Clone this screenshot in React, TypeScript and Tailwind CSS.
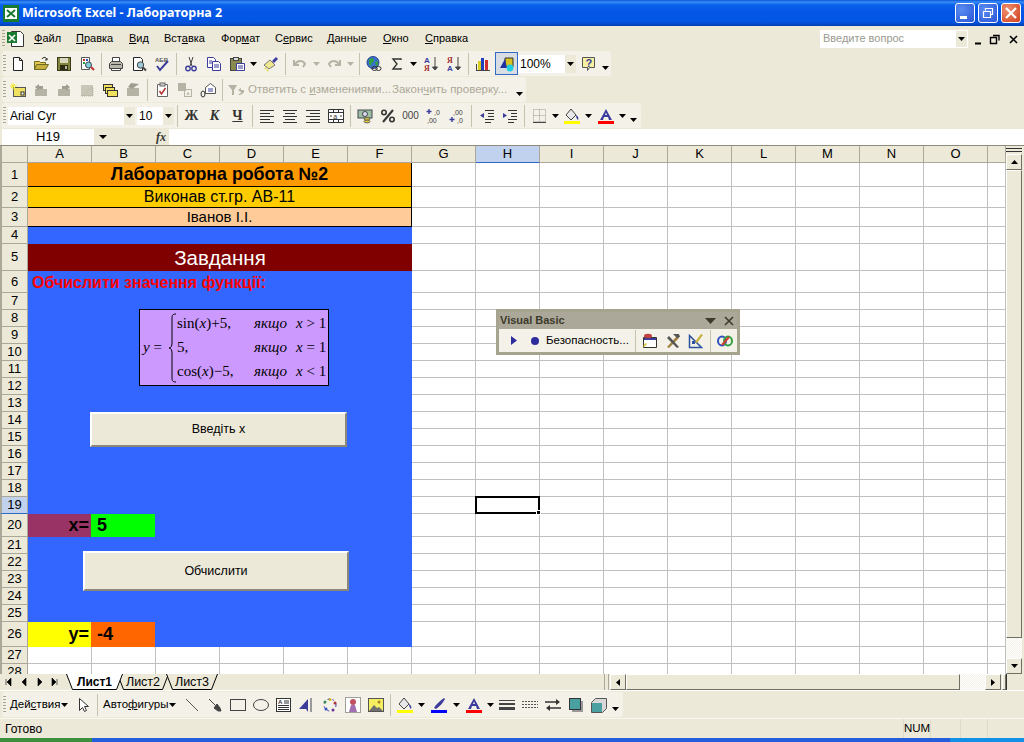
import type { ReactNode } from "react";

const ui = "font-['Liberation_Sans',Arial,sans-serif]";
const navy = "#3c3c9c";
const dis = "#b5b3a3";

const icons: Record<string, ReactNode> = {
  new: <path d="M3.5 1.5h6l3 3v10h-9zM9.5 1.5v3h3" fill="#fff" stroke="#222" />,
  open: (
    <>
      <path d="M1.5 5.5h5l1 1h5v7h-11z" fill="#e8c850" stroke="#6b6b20" />
      <path d="M3.5 8.5h12l-3 5h-11z" fill="#c8b040" stroke="#6b6b20" />
      <path d="M9 3c1-2 3-2 4-1l1 2M14 2v2h-2" fill="none" stroke="#333" />
    </>
  ),
  save: (
    <>
      <rect x="1.5" y="1.5" width="13" height="13" fill="#84843c" stroke="#3a3a18" />
      <rect x="4" y="2" width="8" height="5" fill="#d8d8c0" />
      <rect x="4" y="9" width="8" height="5" fill="#2c2c14" />
      <rect x="9" y="10" width="2" height="3" fill="#b8b8a0" />
    </>
  ),
  perm: (
    <>
      <path d="M2.5 1.5h8v12h-8z" fill="#fff" stroke="#555" />
      <rect x="4" y="3" width="2" height="2" fill="#c03030" />
      <rect x="7" y="3" width="2" height="2" fill="#3050c0" />
      <rect x="4" y="6" width="2" height="2" fill="#30a040" />
      <circle cx="9.5" cy="9" r="3" fill="#7cd0d8" stroke="#445" />
      <path d="M12 11l3 3" stroke="#c03030" strokeWidth="2" />
    </>
  ),
  print: (
    <>
      <path d="M4.5 1.5h7v5h-7z" fill="#fff" stroke="#444" />
      <path d="M1.5 7.5l2-2h9l2 2v5h-13z" fill="#b8b6a8" stroke="#444" />
      <path d="M3.5 12.5h9v2h-9z" fill="#fff" stroke="#444" />
      <path d="M3 8.5h10" stroke="#444" />
    </>
  ),
  preview: (
    <>
      <path d="M2.5 1.5h7l2 2v11h-9z" fill="#fff" stroke="#222" />
      <circle cx="9.5" cy="9" r="3.2" fill="#9cc8d8" stroke="#444" />
      <path d="M12 11.5l3 3" stroke="#444" strokeWidth="2" />
    </>
  ),
  spell: (
    <>
      <text x="1" y="6" fontSize="6" fontWeight="700" fill="#555" fontFamily="Liberation Sans">АБВ</text>
      <path d="M3 10l3 4 8-9" fill="none" stroke={navy} strokeWidth="2" />
    </>
  ),
  cut: (
    <>
      <path d="M6 1l3 9M10 1L7 10" stroke="#444" fill="none" />
      <circle cx="5" cy="12.5" r="2.2" fill="none" stroke={navy} strokeWidth="1.4" />
      <circle cx="11" cy="12.5" r="2.2" fill="none" stroke={navy} strokeWidth="1.4" />
    </>
  ),
  copy: (
    <>
      <path d="M1.5 1.5h6l2 2v8h-8z" fill="#fff" stroke={navy} />
      <path d="M6.5 5.5h6l2 2v7h-8z" fill="#fff" stroke={navy} />
      <path d="M8 9h5M8 11h5M3 5h3M3 7h3" stroke={navy} />
    </>
  ),
  paste: (
    <>
      <rect x="1.5" y="2.5" width="11" height="12" fill="#8a8a4c" stroke="#444" />
      <rect x="4.5" y="1.5" width="5" height="3" fill="#ddd" stroke="#444" />
      <path d="M7.5 7.5h8v7h-8z" fill="#fff" stroke={navy} />
      <path d="M9 10h5M9 12h5" stroke={navy} />
    </>
  ),
  brush: (
    <>
      <path d="M1 9l6-5 5 5-6 4z" fill="#f0e890" stroke="#777" />
      <path d="M9 5l4-4 2 2-4 4z" fill={navy} />
      <path d="M2 13l1-1M4 15l1-1" stroke="#e8d840" strokeWidth="2" />
    </>
  ),
  undo: <path d="M2 4v5h5M3 8c3-4 8-4 10 0l-2 3" fill="none" stroke={dis} strokeWidth="2" />,
  redo: <path d="M14 4v5H9M13 8C10 4 5 4 3 8l2 3" fill="none" stroke={dis} strokeWidth="2" />,
  globe: (
    <>
      <circle cx="7" cy="6.5" r="6" fill="#3a70d0" stroke="#28408c" />
      <path d="M3 3l4-1 1 3-3 3 1 3-3-3zM9 6l3-1 0 4-2 1z" fill="#30a040" />
      <ellipse cx="8.5" cy="12.5" rx="2.6" ry="2" fill="none" stroke="#333" />
      <ellipse cx="12.5" cy="12.5" rx="2.6" ry="2" fill="none" stroke="#333" />
    </>
  ),
  sigma: <path d="M12 4V3H4l4 5-4 5h8v-1" fill="none" stroke="#333" strokeWidth="1.4" />,
  az: (
    <>
      <text x="1" y="7" fontSize="8" fontWeight="700" fill={navy} fontFamily="Liberation Sans">А</text>
      <text x="1" y="15" fontSize="8" fontWeight="700" fill="#a03030" fontFamily="Liberation Serif">Я</text>
      <path d="M12 1v12M9.5 11l2.5 3 2.5-3z" stroke="#444" fill="#444" />
    </>
  ),
  za: (
    <>
      <text x="1" y="7" fontSize="8" fontWeight="700" fill="#a03030" fontFamily="Liberation Serif">Я</text>
      <text x="1" y="15" fontSize="8" fontWeight="700" fill={navy} fontFamily="Liberation Sans">А</text>
      <path d="M12 1v12M9.5 11l2.5 3 2.5-3z" stroke="#444" fill="#444" />
    </>
  ),
  chart: (
    <>
      <path d="M1 14.5h14" stroke="#444" />
      <path d="M1.5 14V8" stroke="#444" />
      <rect x="3" y="5" width="3" height="9" fill="#d8d020" />
      <rect x="6" y="2" width="3" height="12" fill="#2040c0" />
      <rect x="10" y="4" width="3" height="10" fill="#d03030" />
    </>
  ),
  drawing: (
    <>
      <path d="M6 2h8v9H6z" fill="#d8c020" stroke="#333" />
      <path d="M1 12L6 3l2 9z" fill="#2030a0" />
      <circle cx="11" cy="12" r="3.4" fill="#20d0e0" />
    </>
  ),
  help: (
    <>
      <path d="M1.5 1.5h12v10h-5l-2 3v-3h-5z" fill="#f6f0a0" stroke="#555" />
      <text x="4.5" y="10.5" fontSize="11" fontWeight="700" fill={navy} fontFamily="Liberation Sans">?</text>
    </>
  ),
  note: (
    <>
      <rect x="3.5" y="5.5" width="12" height="9" fill="#f0e060" stroke="#555" />
      <path d="M3 1v7M0 4h7M1 2l4 4M5 2L1 6" stroke="#f4e838" />
      <rect x="11" y="10" width="3" height="3" fill="#fff" stroke="#333" />
    </>
  ),
  gr1: (
    <>
      <path d="M2 7h12v7H2z" fill={dis} />
      <path d="M2 5l4-3v2h4v3H6v2z" fill="#a09e90" />
    </>
  ),
  gr2: (
    <>
      <path d="M2 7h12v7H2z" fill={dis} />
      <path d="M14 5l-4-3v2H6v3h4v2z" fill="#a09e90" />
    </>
  ),
  gr3: <path d="M2 14L14 5v9zM2.5 3.5h11v10h-11z" fill={dis} stroke={dis} fillOpacity=".7" strokeDasharray="1 1" />,
  stack: (
    <>
      <rect x="1.5" y="2.5" width="9" height="6" fill="#f0e060" stroke="#333" />
      <rect x="3.5" y="5.5" width="9" height="6" fill="#f0e060" stroke="#333" />
      <rect x="5.5" y="8.5" width="10" height="6" fill="#f0e060" stroke="#333" />
    </>
  ),
  gr4: (
    <>
      <path d="M2 6h12v8H2z" fill={dis} />
      <path d="M6 1L3 5l4 2 7-5z" fill="#a09e90" />
    </>
  ),
  track: (
    <>
      <path d="M3.5 2.5h10v12h-10z" fill="#fff" stroke="#666" />
      <rect x="6" y="1" width="5" height="3" fill="#ccc" stroke="#666" />
      <path d="M5.5 9l2 3 4-6" fill="none" stroke="#b03030" strokeWidth="1.5" />
    </>
  ),
  merge2: (
    <>
      <rect x="1" y="1" width="8" height="8" fill={dis} />
      <rect x="7.5" y="7.5" width="7" height="7" fill="none" stroke={dis} />
      <path d="M11 10v3M9.5 12h3" stroke={dis} />
    </>
  ),
  mail: (
    <>
      <path d="M5.5 5.5l5-4 5 4v6h-10z" fill="#fff" stroke="#555" />
      <path d="M8 7h5M8 9h5" stroke={navy} />
      <ellipse cx="3" cy="12" rx="2" ry="3" fill="none" stroke="#333" />
    </>
  ),
  replyIcon: (
    <>
      <path d="M0 3h9L6 8v5H4V8z" fill={dis} />
      <path d="M10 8l3-2 0 2h3v2c-2 3-5 4-6 2 1 0 3 0 3-2z" fill={dis} />
    </>
  ),
  left: <path d="M1 2.5h14M1 5.5h10M1 8.5h14M1 11.5h10M1 14.5h14" stroke="#333" />,
  center: <path d="M1 2.5h14M3 5.5h10M1 8.5h14M3 11.5h10M1 14.5h14" stroke="#333" />,
  right: <path d="M1 2.5h14M5 5.5h10M1 8.5h14M5 11.5h10M1 14.5h14" stroke="#333" />,
  merge: (
    <>
      <path d="M.5 1.5h15v13H.5zM.5 4.5h15M.5 11.5h15M5.5 1.5v3M10.5 1.5v3M5.5 11.5v3M10.5 11.5v3" fill="#fff" stroke="#333" />
      <text x="5.3" y="10.5" fontSize="7" fill="#333" fontFamily="Liberation Sans">a</text>
      <path d="M2 8h2M12 8h2" stroke="#333" />
    </>
  ),
  money: (
    <>
      <rect x="1" y="2" width="14" height="8" fill="#9cc0a0" stroke="#445" />
      <circle cx="8" cy="6" r="2.5" fill="#dde" stroke="#445" />
      <ellipse cx="10" cy="11" rx="3" ry="1.4" fill="#e0c840" stroke="#665" />
      <ellipse cx="10" cy="13.5" rx="3" ry="1.4" fill="#e0c840" stroke="#665" />
    </>
  ),
  percent: (
    <>
      <circle cx="4" cy="4.5" r="2.2" fill="none" stroke="#333" strokeWidth="1.6" />
      <circle cx="12" cy="11.5" r="2.2" fill="none" stroke="#333" strokeWidth="1.6" />
      <path d="M13 2L3 14" stroke="#333" strokeWidth="2" />
    </>
  ),
  dec1: (
    <>
      <path d="M3 1v5M.5 3.5h5" stroke={navy} strokeWidth="1.4" />
      <text x="8" y="7" fontSize="7" fill="#444" fontFamily="Liberation Sans">,0</text>
      <text x="1" y="15" fontSize="7" fill="#444" fontFamily="Liberation Sans">,00</text>
    </>
  ),
  dec2: (
    <>
      <text x="4" y="7" fontSize="7" fill="#444" fontFamily="Liberation Sans">,00</text>
      <path d="M3 9v5M.5 11.5h5" stroke={navy} strokeWidth="1.4" />
      <text x="8" y="15" fontSize="7" fill="#444" fontFamily="Liberation Sans">,0</text>
    </>
  ),
  indL: (
    <>
      <path d="M6 2.5h9M9 5.5h6M9 8.5h6M6 11.5h9M6 14.5h6" stroke="#333" />
      <path d="M5 5v5L1 7.5z" fill={navy} />
    </>
  ),
  indR: (
    <>
      <path d="M6 2.5h9M9 5.5h6M9 8.5h6M6 11.5h9M6 14.5h6" stroke="#333" />
      <path d="M1 5v5l4-2.5z" fill={navy} />
    </>
  ),
  border: (
    <>
      <path d="M1.5 1.5h12v12h-12zM7.5 1.5v12M1.5 7.5h12" fill="none" stroke="#999" strokeDasharray="1 1" />
      <path d="M1 14.5h13" stroke="#444" />
    </>
  ),
  fill: (
    <>
      <path d="M7 1l5 6-5 5-5-5z" fill="#e8e8e8" stroke="#444" />
      <path d="M12 7c2 1 3 3 2 5-1-1-2-2-2-5z" fill={navy} />
      <rect y="13" width="16" height="3" fill="#ffff00" />
    </>
  ),
  font: (
    <>
      <path d="M2 12L8 1l6 11h-3l-1-3H6l-1 3z" fill={navy} />
      <path d="M7 7h2L8 4.5z" fill="#eee" />
      <rect y="13" width="16" height="3" fill="#ff0000" />
    </>
  ),
  pen: (
    <>
      <path d="M3 11c2-4 6-7 10-10l1 1c-2 4-5 7-9 10z" fill={navy} />
      <rect y="13" width="16" height="3" fill="#0000ff" />
    </>
  ),
  cursor: <path d="M4.5 1.5v12l3-3 2 4 2-1-2-4h4z" fill="#fff" stroke="#333" />,
  line: <path d="M2 2l12 12" stroke="#555" />,
  arrowLine: <path d="M2 2l8 8M7 11l4 3 3 0-1-3-3-4z" fill="#444" stroke="#444" />,
  rect: <rect x=".5" y="2.5" width="15" height="11" fill="none" stroke="#444" />,
  oval: <ellipse cx="8" cy="8" rx="7.5" ry="5.5" fill="none" stroke="#444" />,
  textbox: (
    <>
      <rect x=".5" y="1.5" width="14" height="13" fill="#fff" stroke="#333" />
      <path d="M8 4h5M8 6h5M2 8.5h11M2 10.5h11M2 12.5h11" stroke="#333" />
      <text x="2" y="7" fontSize="6" fontWeight="700" fill="#333" fontFamily="Liberation Sans">A</text>
    </>
  ),
  wordart: (
    <>
      <path d="M0 12l9-10v13l-2-3H5z" fill={navy} />
      <path d="M11 1h2v14h-2z" fill="#9a9a9a" />
    </>
  ),
  diagram: (
    <>
      <circle cx="8" cy="2.5" r="1.5" fill="#d8c020" />
      <circle cx="13" cy="6" r="1.5" fill="#c03030" />
      <circle cx="11" cy="13" r="1.5" fill="#803090" />
      <circle cx="4" cy="12" r="1.5" fill="#3050c0" />
      <circle cx="3" cy="5" r="1.5" fill="#30a040" />
      <circle cx="8" cy="8" r="6" fill="none" stroke="#3c3c9c" strokeDasharray="2 3" />
    </>
  ),
  clipart: (
    <>
      <rect x=".5" y=".5" width="15" height="15" fill="#fff" stroke="#444" strokeDasharray="1 1" />
      <circle cx="8" cy="5" r="3" fill="#c05060" />
      <path d="M4 15l2-7h4l2 7z" fill="#a070b0" />
    </>
  ),
  picture: (
    <>
      <rect x=".5" y="1.5" width="15" height="13" fill="#f4ee60" stroke="#555" />
      <circle cx="11" cy="5" r="1.5" fill="#a08020" />
      <path d="M1 14l5-6 3 3 2-1 4 4z" fill="#707070" />
    </>
  ),
  weights: <path d="M0 3h16v1H0zM0 6h16v2H0zM0 10h16v3H0z" fill="#444" />,
  dash: <path d="M0 4.5h16M0 7.5h16M0 10.5h16" stroke="#555" strokeDasharray="2 1" />,
  arrows: (
    <>
      <path d="M0 5h12M16 11H4" stroke="#333" strokeWidth="1.4" />
      <path d="M11 2l4 3-4 3zM5 8l-4 3 4 3z" fill="#333" />
    </>
  ),
  shadow: (
    <>
      <rect x="4" y="4" width="11" height="11" fill="#999" />
      <rect x="1.5" y="1.5" width="11" height="11" fill="#4aa0a0" stroke="#333" />
    </>
  ),
  box3d: (
    <>
      <path d="M.5 5.5l4-4h11v10l-4 4H.5z" fill="#d8d8d8" stroke="#555" />
      <rect x="1" y="6" width="10" height="9" fill="#4aa0a0" />
    </>
  ),
  vbForm: (
    <>
      <path d="M1.5 4.5h13v10h-13z" fill="#fff" stroke="#333" />
      <path d="M2 5h12v2H2z" fill={navy} />
      <ellipse cx="6" cy="3" rx="4" ry="2.2" fill="#c04040" />
      <path d="M1 13l3-3 1 1-3 3z" fill="#d8c020" />
    </>
  ),
  vbTools: (
    <>
      <path d="M2 14L12 3l2 2L4 15z" fill="#a08040" />
      <path d="M14 14L4 3 2 5l10 10z" fill="#555" />
      <path d="M8 1h6l1 3-3 1z" fill="#555" />
    </>
  ),
  vbDesign: (
    <>
      <path d="M1.5 14.5v-12l12 12z" fill="none" stroke="#2a50a0" strokeWidth="1.5" />
      <path d="M7 9l6-8 2 1-6 8z" fill="#c8b040" />
      <path d="M4 8h3v3H4z" fill="#2a50a0" />
    </>
  ),
  vbLink: (
    <>
      <ellipse cx="5" cy="8" rx="4" ry="4.5" fill="none" stroke="#3050c0" strokeWidth="2" />
      <ellipse cx="11" cy="8" rx="4" ry="4.5" fill="none" stroke="#30a040" strokeWidth="2" />
      <path d="M5 12l7-8" stroke="#d04030" strokeWidth="2" />
    </>
  ),
};

function Ico({ n, size = 16 }: { n: string; size?: number }) {
  return (
    <svg viewBox="0 0 16 16" width={size} height={size} className="block">
      {icons[n]}
    </svg>
  );
}

const B = ({ n }: { n: string }) => (
  <div className="flex h-[22px] w-[23px] shrink-0 items-center justify-center">
    <Ico n={n} />
  </div>
);

const Arr = ({ w = 11, color = "#000" }: { w?: number; color?: string }) => (
  <div className="flex shrink-0 items-center justify-center" style={{ width: w }}>
    <svg width="7" height="4">
      <path d="M0 0h7L3.5 4z" fill={color} />
    </svg>
  </div>
);

const Sep = () => (
  <div className="flex h-[22px] w-[6px] shrink-0 justify-center">
    <div className="h-full w-px bg-[#c5c2b0]" />
  </div>
);

const Grip = () => (
  <div className="h-[18px] w-[3px] shrink-0 bg-[repeating-linear-gradient(#a9a692_0_1px,transparent_1px_3px)]" />
);

// overflow chevron at the end of a toolbar
const More = () => (
  <div className="flex h-full w-[11px] shrink-0 items-end justify-center pb-[6px]">
    <svg width="7" height="4">
      <path d="M0 0h7L3.5 4z" fill="#000" />
    </svg>
  </div>
);

function Band({ w, children }: { w: number; children: ReactNode }) {
  return (
    <div className="ml-[2px] flex h-[25px] items-center rounded-[3px] bg-[#f4f2e8] pl-[1px]" style={{ width: w }}>
      <Grip />
      {children}
    </div>
  );
}

function Combo({ w, text, cls = "" }: { w: number; text: string; cls?: string }) {
  return (
    <div className={"flex h-[18px] shrink-0 items-center bg-white pl-[2px] text-[12px] leading-[16px] text-black " + cls} style={{ width: w }}>
      <span className="flex-1 truncate">{text}</span>
      <div className="flex h-full w-[11px] items-center justify-center bg-[#ece9d8]">
        <svg width="7" height="4">
          <path d="M0 0h7L3.5 4z" fill="#000" />
        </svg>
      </div>
    </div>
  );
}

const menus: [string, string, string, number][] = [
  ["", "Ф", "айл", 42],
  ["", "П", "равка", 53],
  ["", "В", "ид", 35],
  ["Вст", "а", "вка", 57],
  ["Фор", "м", "ат", 54],
  ["С", "е", "рвис", 52],
  ["", "Д", "анные", 56],
  ["", "О", "кно", 42],
  ["", "С", "правка", 50],
];

function TitleBar() {
  const btn = "flex h-[20px] w-[20px] items-center justify-center rounded-[3px] border border-white";
  return (
    <div className="flex h-[26px] items-center bg-[linear-gradient(#0a56d8_0,#3a8cf8_2px,#0860ea_5px,#0356e6_12px,#0355e4_20px,#0350d8_23px,#003fb0_26px)] pl-[3px] pr-[3px]">
      <svg width="16" height="17" viewBox="0 0 16 17" className="shrink-0">
        <rect width="16" height="17" fill="#1a7a30" />
        <rect x="2" y="3" width="12" height="11" fill="#fff" />
        <path d="M4 5l8 7M12 5l-8 7" stroke="#1a7a30" strokeWidth="2" />
      </svg>
      <span className="ml-[3px] flex-1 font-['Noto_Sans',sans-serif] text-[12.5px] font-bold text-white">
        Microsoft Excel - Лабораторна 2
      </span>
      <div className="flex gap-[3px]">
        <div className={btn + " bg-[radial-gradient(circle_at_30%_30%,#5a8cf0,#2a55d8)] items-end pb-[3px] pr-[4px] justify-center"}>
          <div className="h-[3px] w-[7px] bg-white" />
        </div>
        <div className={btn + " bg-[radial-gradient(circle_at_30%_30%,#5a8cf0,#2a55d8)]"}>
          <svg width="12" height="12" fill="none" stroke="#fff">
            <path d="M3.5 3.5v-2h7v6h-2" strokeWidth="1.2" />
            <path d="M1.5 4.5h7v6h-7z" strokeWidth="1.2" />
          </svg>
        </div>
        <div className={btn + " bg-[radial-gradient(circle_at_30%_30%,#ee9070,#d0401c)]"}>
          <svg width="12" height="12" stroke="#fff" strokeWidth="2.2">
            <path d="M1 1l10 10M11 1L1 11" />
          </svg>
        </div>
      </div>
    </div>
  );
}

function MenuBar() {
  return (
    <div className="flex h-[25px] items-center bg-[#ece9d8] pl-[2px] text-[11px] text-black">
      <Grip />
      <svg width="18" height="18" viewBox="0 0 18 18" className="ml-[2px] mr-[9px] shrink-0">
        <path d="M4.5 1.5h9l3 3v12h-12z" fill="#fff" stroke="#333" />
        <rect x="0" y="2" width="10" height="11" fill="#1a7a30" />
        <path d="M2 5l6 6M8 5l-6 6" stroke="#fff" strokeWidth="1.6" />
      </svg>
      {menus.map(([a, u, b, w]) => (
        <div key={a + u + b} className="shrink-0" style={{ width: w }}>
          {a}
          <u>{u}</u>
          {b}
        </div>
      ))}
      <div className="ml-auto flex items-center">
        <div className="flex h-[18px] w-[148px] items-center border border-[#fff] bg-white pl-[2px] text-[#9a9a90]">
          <span className="flex-1">Введите вопрос</span>
          <div className="flex h-full w-[11px] items-center justify-center bg-[#ece9d8]">
            <svg width="7" height="4">
              <path d="M0 0h7L3.5 4z" fill="#000" />
            </svg>
          </div>
        </div>
        <svg width="52" height="12" className="ml-[4px]" fill="none" stroke="#000">
          <path d="M3 10.5h6" strokeWidth="2" />
          <path d="M18.5 4.5h6v6h-6zM21 2.5h6v5" strokeWidth="1.4" />
          <path d="M38 3l7 7M45 3l-7 7" strokeWidth="1.6" />
        </svg>
      </div>
    </div>
  );
}

function Toolbars() {
  return (
    <div className={"bg-[#ece9d8] " + ui}>
      <div className="h-[25px]">
        <Band w={609}>
          <B n="new" /><B n="open" /><B n="save" /><B n="perm" /><Sep />
          <B n="print" /><B n="preview" /><B n="spell" /><Sep />
          <B n="cut" /><B n="copy" /><B n="paste" /><Arr w={11} /><B n="brush" /><Sep />
          <B n="undo" /><Arr color={dis} /><B n="redo" /><Arr color={dis} /><Sep />
          <B n="globe" /><B n="sigma" /><Arr /><div className="w-[1px]" /><B n="az" /><B n="za" /><Sep />
          <B n="chart" />
          <div className="ml-[1px] flex h-[23px] w-[23px] shrink-0 items-center justify-center border border-[#316ac5] bg-[#d8dde4]">
            <Ico n="drawing" />
          </div>
          <Combo w={58} text="100%" />
          <div className="ml-[1px]"><B n="help" /></div>
          <More />
        </Band>
      </div>
      <div className="h-[26px] pt-[1px]">
        <Band w={524}>
          <B n="note" /><B n="gr1" /><B n="gr2" /><B n="gr3" /><B n="stack" /><B n="gr4" /><Sep />
          <B n="track" /><B n="merge2" /><B n="mail" /><Sep />
          <div className="ml-[3px] mr-[4px] h-4 w-4 shrink-0"><Ico n="replyIcon" /></div>
          <span className="w-[144px] shrink-0 text-[11.5px] text-[#aca899]">
            Ответить с <u>и</u>зменениями...
          </span>
          <span className="w-[122px] shrink-0 text-[11.5px] text-[#aca899]">
            Закон<u>ч</u>ить проверку...
          </span>
          <More />
        </Band>
      </div>
      <div className="h-[26px] pt-[1px]">
        <Band w={639}>
          <Combo w={127} text="Arial Cyr" cls="ml-[2px]" />
          <Combo w={37} text="10" cls="ml-[2px]" />
          <Sep />
          {["Ж", "К", "Ч"].map((t, i) => (
            <div
              key={t}
              className={
                "flex h-[22px] w-[23px] shrink-0 items-center justify-center font-['Liberation_Serif',serif] text-[14px] font-bold text-[#333] " +
                (i === 1 ? "italic " : "") +
                (i === 2 ? "underline" : "")
              }
            >
              {t}
            </div>
          ))}
          <Sep />
          <B n="left" /><B n="center" /><B n="right" /><B n="merge" /><Sep />
          <B n="money" /><B n="percent" />
          <div className="flex w-[23px] shrink-0 justify-center text-[10px] text-[#444]">000</div>
          <B n="dec1" /><B n="dec2" /><Sep />
          <div className="w-[1px]" />
          <B n="indL" /><B n="indR" /><Sep />
          <div className="w-[1px]" />
          <B n="border" /><Arr w={9} /><B n="fill" /><Arr w={11} /><B n="font" /><Arr w={11} />
          <More />
        </Band>
      </div>
      <div className="flex h-[17px] items-center text-[13px]">
        <div className="ml-[2px] w-[92px] bg-white text-center leading-[16px] text-black">H19</div>
        <div className="flex w-[18px] justify-center">
          <svg width="8" height="4">
            <path d="M0 0h8L4 4z" fill="#000" />
          </svg>
        </div>
        <div className="w-[57px] pr-[3px] text-right font-['Liberation_Serif',serif] text-[12px] font-bold italic leading-[16px] text-[#333]">
          fx
        </div>
        <div className="h-[16px] flex-1 bg-white" />
      </div>
    </div>
  );
}

const cols = "ABCDEFGHIJKLMNO".split("");
const blank = "border-r border-b border-[#c0c0c0] bg-white";
const head = "flex items-center justify-center border-r border-b border-[#aca899] bg-[#ece9d8] text-[13px] text-black";
const headOn = "flex items-center justify-center border-r border-b border-r-[#aca899] border-b-[#316ac5] bg-[#c1d2ee] text-[13px] text-black";
const rowNumbers = Array.from({ length: 28 }, (_, i) => i + 1);

function RestOfRow({ row }: { row: number }) {
  // columns G..O and the cut-off P
  const rest = "GHIJKLMNOP".split("");
  return (
    <>
      {rest.map((c) => (
        <div key={c} className={"relative " + blank}>
          {row === 19 && c === "H" && (
            <div className="absolute -left-px -top-px z-10 h-[18px] w-[65px] border-2 border-black">
              <div className="absolute -bottom-[3px] -right-[3px] h-[5px] w-[5px] border border-white bg-black" />
            </div>
          )}
        </div>
      ))}
    </>
  );
}

function merged(row: number): ReactNode {
  const span6 = "col-span-6 flex items-center justify-center ";
  switch (row) {
    case 1:
      return <div className={span6 + "border-r border-b border-black bg-[#ff9900] text-[17.8px] font-bold"}>Лабораторна робота №2</div>;
    case 2:
      return <div className={span6 + "border-r border-b border-black bg-[#ffcc00] text-[16px]"}>Виконав ст.гр. АВ-11</div>;
    case 3:
      return <div className={span6 + "border-r border-b border-black bg-[#ffcc99] text-[15px]"}>Іванов І.І.</div>;
    case 5:
      return <div className={span6 + "bg-[#800000] pt-[1px] text-[20.5px] text-white"}>Завдання</div>;
    case 6:
      return (
        <div className="col-span-6 flex items-center bg-[#3366ff] pl-[4px] pt-[1px] text-[16px] font-bold text-[#ff0000]">
          Обчислити значення функції:
        </div>
      );
    case 20:
      return (
        <>
          <div className="flex items-center justify-end bg-[#993366] pr-[3px] text-[18px] font-bold">x=</div>
          <div className="-ml-px flex items-center bg-[#00ff00] pl-[6px] text-[18px] font-bold">5</div>
          <div className="col-span-4 -ml-px bg-[#3366ff]" />
        </>
      );
    case 26:
      return (
        <>
          <div className="flex items-center justify-end bg-[#ffff00] pr-[3px] text-[18px] font-bold">y=</div>
          <div className="-ml-px flex items-center bg-[#ff6600] pl-[6px] text-[18px] font-bold">-4</div>
          <div className="col-span-4 -ml-px bg-[#3366ff]" />
        </>
      );
    case 27:
    case 28:
      return Array.from({ length: 6 }, (_, i) => <div key={i} className={blank} />);
    default:
      return <div className="col-span-6 bg-[#3366ff]" />;
  }
}

function Formula() {
  const lines: [ReactNode, string][] = [
    [<>sin(<i>x</i>)+5,</>, " > 1"],
    [<>5,</>, " = 1"],
    [<>cos(<i>x</i>)−5,</>, " < 1"],
  ];
  return (
    <div className="absolute left-[139px] top-[163px] flex h-[77px] w-[190px] items-center border border-black bg-[#cc99ff] pl-[3px] font-['Liberation_Serif',serif] text-[15px] text-black">
      <span className="w-[25px] shrink-0 whitespace-nowrap">
        <i>y</i> =
      </span>
      <svg width="9" height="70" viewBox="0 0 9 70" className="shrink-0" fill="none" stroke="#000" strokeWidth="1">
        <path d="M8 1C4 1 4 3 4 6v24c0 3-1 5-3 5 2 0 3 2 3 5v24c0 3 0 5 4 5" />
      </svg>
      <div className="grid flex-1 grid-cols-[77px_42px_33px] grid-rows-[24px_24px_24px] items-center">
        {lines.map(([a, c], i) => (
          <div key={i} className="contents">
            <span className="whitespace-nowrap">{a}</span>
            <i className="whitespace-nowrap">якщо</i>
            <span className="whitespace-pre">
              <i>x</i>
              {c}
            </span>
          </div>
        ))}
      </div>
    </div>
  );
}

function Btn({ label, cls }: { label: string; cls: string }) {
  return (
    <div
      className={
        "absolute flex items-center justify-center border-2 border-t-white border-l-white border-r-[#8a887a] border-b-[#8a887a] bg-[#ece9d8] text-[12.5px] text-black " +
        cls
      }
    >
      {label}
    </div>
  );
}

function VbToolbar() {
  return (
    <div className="absolute left-[496px] top-[163px] z-20 h-[46px] w-[244px] border-[3px] border-[#a6a38f] bg-[#f4f2e8] text-[11.5px] text-black">
      <div className="flex h-[17px] items-center bg-[#aca899] pl-[1px] pr-[3px] text-[11px] font-bold text-[#3c3a2c]">
        <span className="flex-1">Visual Basic</span>
        <svg width="11" height="6" className="mr-[8px]">
          <path d="M0 0h11L5.5 6z" fill="#3c3a2c" />
        </svg>
        <svg width="10" height="10" stroke="#3c3a2c" strokeWidth="1.6">
          <path d="M1 1l8 8M9 1l-8 8" />
        </svg>
      </div>
      <div className="flex h-[23px] items-center">
        <div className="ml-[12px] w-[20px]">
          <svg width="6" height="9">
            <path d="M0 0l6 4.5L0 9z" fill="#2c2c9c" />
          </svg>
        </div>
        <div className="mr-[7px] h-[8px] w-[8px] rounded-full bg-[#2c2c9c]" />
        <span className="w-[86px] shrink-0 whitespace-nowrap">Безопасность...</span>
        <Sep />
        <B n="vbForm" /><B n="vbTools" /><B n="vbDesign" /><Sep /><B n="vbLink" />
      </div>
    </div>
  );
}

const sb = "flex items-center justify-center border border-t-white border-l-white border-r-[#716f64] border-b-[#716f64] bg-[#ece9d8]";
const dither = "bg-[repeating-conic-gradient(#f4f2e8_0_25%,#ffffff_0_50%)] bg-[length:2px_2px]";

function VScroll() {
  return (
    <div className="flex w-[18px] shrink-0 flex-col bg-[#ece9d8] pr-[2px]">
      <div className="mt-[2px] h-[4px] border-y border-[#333]" />
      <div className={sb + " mt-[2px] h-[16px]"}>
        <svg width="7" height="4">
          <path d="M3.5 0L7 4H0z" fill="#000" />
        </svg>
      </div>
      <div className={sb + " h-[468px]"} />
      <div className={dither + " flex-1"} />
      <div className={sb + " h-[16px]"}>
        <svg width="7" height="4">
          <path d="M0 0h7L3.5 4z" fill="#000" />
        </svg>
      </div>
    </div>
  );
}

function Sheet() {
  return (
    <div className={"flex h-[529px] border-t border-[#8f8c7c] bg-[#ece9d8] text-black " + ui}>
      <div className="relative flex-1 overflow-hidden">
        <div className="grid grid-cols-[28px_repeat(15,64px)_18px] grid-rows-[17px_24px_21px_19px_17px_27px_22px_repeat(13,17px)_23px_repeat(5,17px)_25px_17px_17px]">
          <div className={head + " border-l-2 border-l-[#aca899]"} />
          {cols.map((c) => (
            <div key={c} className={c === "H" ? headOn : head}>
              {c}
            </div>
          ))}
          <div className={head} />
          {rowNumbers.map((r) => (
            <div key={r} className="contents">
              <div className={(r === 19 ? headOn : head) + " border-l-2 border-l-[#aca899]"}>{r}</div>
              {merged(r)}
              <RestOfRow row={r} />
            </div>
          ))}
        </div>
        <Formula />
        <Btn label="Введіть x" cls="left-[90px] top-[266px] h-[35px] w-[257px]" />
        <Btn label="Обчислити" cls="left-[83px] top-[405px] h-[40px] w-[266px]" />
        <VbToolbar />
      </div>
      <VScroll />
    </div>
  );
}

function Tab({ label, x, w, on }: { label: string; x: number; w: number; on?: boolean }) {
  return (
    <div className={"relative flex h-[16px] shrink-0 items-center justify-center " + (on ? "z-10" : "")} style={{ width: w, marginLeft: x }}>
      <svg width={w} height="16" className="absolute left-0 top-0">
        <path d={`M0.5 0L6.5 15.5H${w - 6.5}L${w - 0.5} 0`} fill={on ? "#fff" : "#ece9d8"} stroke="#000" />
      </svg>
      <span className={"relative " + (on ? "text-[12px] font-bold" : "text-[12.5px]")}>{label}</span>
    </div>
  );
}

function TabsRow() {
  const nav = ["M1 1v6M6 0v8L2 4z", "M6 0v8L2 4z", "M2 0v8l4-4z", "M6 1v6M1 0v8l4-4z"];
  return (
    <div className={"flex h-[16px] items-center bg-[#ece9d8] text-black " + ui}>
      <div className="flex w-[66px] shrink-0 pl-[5px]">
        {nav.map((d) => (
          <div key={d} className="w-[16px]">
            <svg width="8" height="8">
              <path d={d} fill="#000" stroke="#000" strokeWidth=".6" />
            </svg>
          </div>
        ))}
      </div>
      <Tab label="Лист1" x={0} w={57} on />
      <Tab label="Лист2" x={-6} w={52} />
      <Tab label="Лист3" x={-3} w={52} />
      <div className="ml-[386px] h-full w-[5px] shrink-0 border-x border-x-[#aca899] bg-[#ece9d8]" />
      <div className={sb + " ml-[1px] h-[16px] w-[16px] shrink-0"}>
        <svg width="4" height="7">
          <path d="M4 0v7L0 3.5z" fill="#000" />
        </svg>
      </div>
      <div className={sb + " h-[16px] w-[334px] shrink-0"} />
      <div className={dither + " h-[16px] w-[25px] shrink-0"} />
      <div className={sb + " h-[16px] w-[16px] shrink-0"}>
        <svg width="4" height="7">
          <path d="M0 0v7l4-3.5z" fill="#000" />
        </svg>
      </div>
      <div className={sb + " ml-[1px] h-[16px] w-[4px] shrink-0"} />
      <div className="h-full w-[1px] shrink-0 bg-[#333]" />
    </div>
  );
}

function DrawBar() {
  return (
    <div className={"flex h-[28px] items-center border-t border-white bg-[#ece9d8] text-[11.5px] text-black " + ui}>
      <Band w={621}>
        <span className="ml-[4px] w-[49px] shrink-0">Дей<u>с</u>твия</span>
        <Arr w={11} />
        <div className="w-[1px]" />
        <B n="cursor" /><Sep />
        <span className="ml-[3px] w-[64px] shrink-0">Авто<u>ф</u>игуры</span>
        <Arr w={11} />
        <div className="w-[2px]" />
        <B n="line" /><B n="arrowLine" /><B n="rect" /><B n="oval" /><B n="textbox" /><B n="wordart" /><B n="diagram" /><B n="clipart" /><B n="picture" /><Sep />
        <B n="fill" /><Arr w={11} /><B n="pen" /><Arr w={12} /><B n="font" /><Arr w={10} />
        <B n="weights" /><B n="dash" /><B n="arrows" /><B n="shadow" /><B n="box3d" />
        <More />
      </Band>
    </div>
  );
}

function StatusBar() {
  const panel = "h-full border-l border-[#dedbc8]";
  return (
    <div className={"flex h-[20px] items-center border-t border-[#f8f7f0] bg-[#ece9d8] pl-[5px] text-[12px] text-black " + ui}>
      <span className="flex-1">Готово</span>
      <div className="flex h-full items-center pr-[3px]">
        <span className={panel + " flex w-[27px] items-center justify-center text-[11.5px]"}>NUM</span>
        <div className={panel + " w-[30px]"} />
        <div className={panel + " w-[27px]"} />
        <div className={panel + " w-[34px]"} />
      </div>
    </div>
  );
}

export default function App() {
  return (
    <div className="flex h-[742px] w-[1024px] flex-col overflow-hidden bg-[#ece9d8]">
      <TitleBar />
      <div className={ui}>
        <MenuBar />
      </div>
      <Toolbars />
      <Sheet />
      <TabsRow />
      <DrawBar />
      <StatusBar />
      <div className="flex h-[4px]">
        <div className="w-[92px] bg-[#3c8f3c]" />
        <div className="w-[858px] bg-[#245edb]" />
        <div className="flex-1 bg-[#1290e8]" />
      </div>
    </div>
  );
}
